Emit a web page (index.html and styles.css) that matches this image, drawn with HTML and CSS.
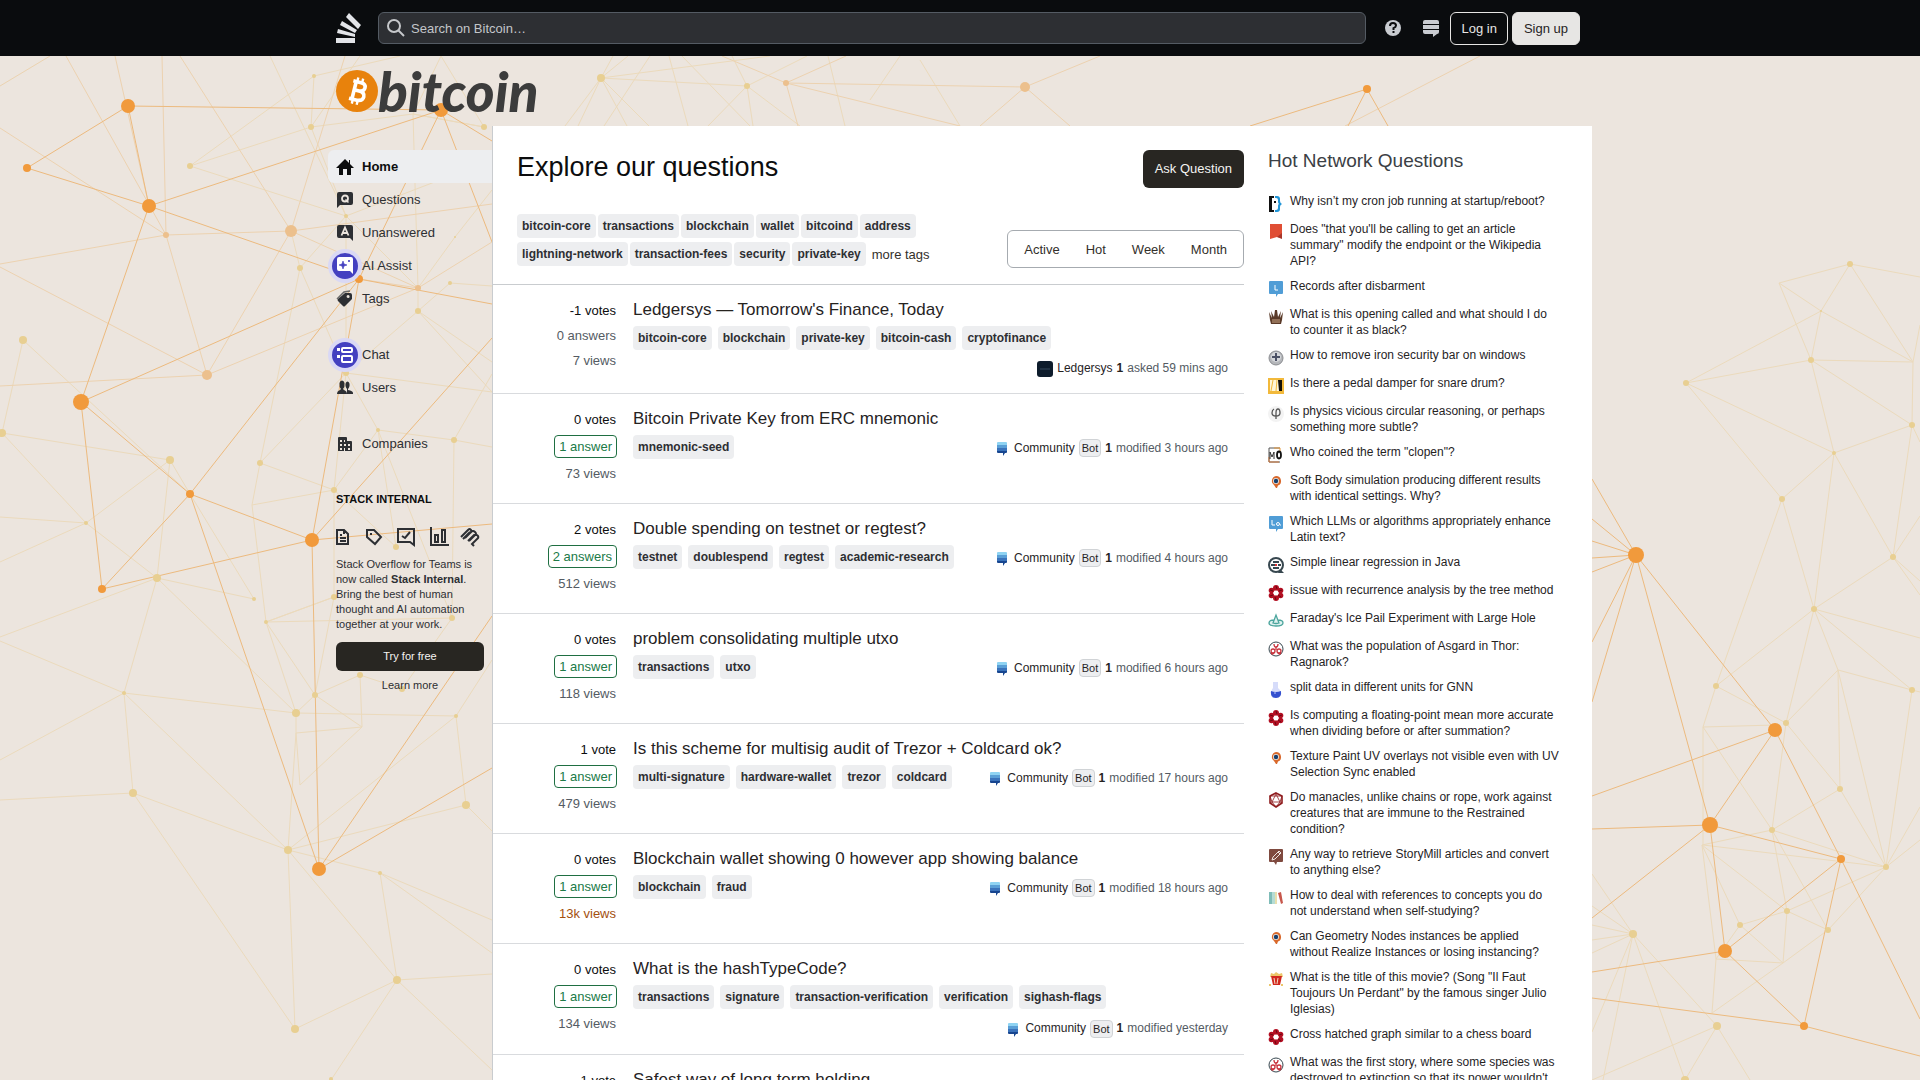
FILE: index.html
```html
<!DOCTYPE html>
<html lang="en">
<head>
    <meta charset="UTF-8">
    <meta name="viewport" content="width=device-width, initial-scale=1.0">
    <title>Bitcoin Stack Exchange</title>
    <link rel="stylesheet" href="styles.css">
</head>
<body>

<!-- icon sprite -->
<svg class="sprite" aria-hidden="true">
    <symbol id="i-unix" viewBox="0 0 16 16"><path d="M1 0h5v2H4v12h2v2H1z" fill="#111"/><path d="M7 0h2q3 0 3 3v2q0 2 2 3q-2 1-2 3v2q0 3-3 3H7v-2h1q2 0 2-2v-2q0-2 1-2q-1-1-1-2V4q0-2-2-2H7z" fill="#2196d8"/><path d="M6 5h2v2H6z" fill="#111"/></symbol>
    <symbol id="i-flag" viewBox="0 0 16 16"><path d="M2 0h12v14l-5-1-7 2z" fill="#e04e34"/><path d="M14 9v6l-5-2z" fill="#a8362a"/></symbol>
    <symbol id="i-law" viewBox="0 0 16 16"><path d="M2 0h12q1 0 1 1v11q0 1-1 1h-4l-2 3v-3H2q-1 0-1-1V1q0-1 1-1z" fill="#509dd6"/><path d="M7 4v5h3" fill="none" stroke="#fff"/></symbol>
    <symbol id="i-latin" viewBox="0 0 16 16"><path d="M2 0h12q1 0 1 1v11q0 1-1 1h-4l-2 3v-3H2q-1 0-1-1V1q0-1 1-1z" fill="#509dd6"/><path d="M4 4v5h3M12 9h1" fill="none" stroke="#fff"/><circle cx="10" cy="8" r="1.5" fill="none" stroke="#fff"/></symbol>
    <symbol id="i-chess" viewBox="0 0 16 16"><path d="M3 15l-1-4-1-8 3 6-1-7 3 6 1-7h2l1 7 3-6-1 7 3-6-1 8-1 4z" fill="#5a3a28"/><path d="M4 11h8M4 13h8" stroke="#c9a585"/></symbol>
    <symbol id="i-diy" viewBox="0 0 16 16"><circle cx="8" cy="8" r="7" fill="#b4b6ba" stroke="#8b8d91"/><circle cx="8" cy="7" r="5" fill="#d5d7da"/><path d="M7 3h2v3h3v2H9v3H7V8H4V6h3z" fill="#4c5266"/></symbol>
    <symbol id="i-music" viewBox="0 0 16 16"><path d="M0 0h16v16H0z" fill="#f2b93b"/><path d="M2 2h12v11H2z" fill="#fff6d8"/><path d="M5 2L3 13M9 2L8 13" stroke="#f2b93b"/><path d="M10 2h4v11h-3z" fill="#15110a"/></symbol>
    <symbol id="i-phi" viewBox="0 0 16 16"><circle cx="8" cy="8" r="8" fill="#f3f3f3"/><path d="M6 3Q4 4 4 7q0 3 4 3t4-3q0-4-2-4T8 7v6" fill="none" stroke="#555" stroke-width="1.3"/></symbol>
    <symbol id="i-mo" viewBox="0 0 16 16"><path d="M12 1H1v14h11" fill="none" stroke="#555"/><path d="M1 10v5h10" fill="none" stroke="#d17a3e"/><path d="M6 1h6v3" fill="none" stroke="#e89a3c"/><path d="M2 12V5l2 5 2-5v7" fill="none" stroke="#333"/><ellipse cx="11" cy="8" rx="2" ry="3.5" fill="none" stroke="#111" stroke-width="1.8"/></symbol>
    <symbol id="i-blender" viewBox="0 0 16 16"><path d="M8 1a5 5 0 0 1 2 9.600L9 13H8l-2-3A5 5 0 0 1 8 1z" fill="#d9692c"/><circle cx="8" cy="6" r="3" fill="#e8e4e0"/><circle cx="8" cy="6" r="2.200" fill="#17406d"/></symbol>
    <symbol id="i-so-code" viewBox="0 0 16 16"><circle cx="8" cy="8" r="7" fill="none" stroke="#37474f" stroke-width="2"/><path d="M12 12l4 4h-6z" fill="#37474f"/><path d="M5 5h6M3 8h4M10 8h3M5 11h6" stroke="#37474f" stroke-width="2"/><path d="M7 8h2" stroke="#d33" stroke-width="2"/></symbol>
    <symbol id="i-mathematica" viewBox="0 0 16 16"><g fill="#b30f22"><circle cx="8" cy="3" r="3"/><circle cx="12.500" cy="5.500" r="2.800"/><circle cx="12.500" cy="10.500" r="2.800"/><circle cx="8" cy="13" r="3"/><circle cx="3.500" cy="10.500" r="2.800"/><circle cx="3.500" cy="5.500" r="2.800"/></g><path d="M8 1l1 3M14 5l-3 1M13 12l-3-2M8 15l-1-3M2 11l3-1M2 5l3 1" stroke="#6b0713"/><circle cx="8" cy="8" r="2.500" fill="#fff"/></symbol>
    <symbol id="i-physics" viewBox="0 0 16 16"><path d="M1 10q0-3 5-3l2-5 2 5q5 0 5 3t-7 3-7-3z" fill="#dff1ef"/><path d="M6 7Q1 7 1 10t7 3 7-3q0-3-5-3M5 10l3-8 3 8q-3 1-6 0z" fill="none" stroke="#4ba59d" stroke-width="1.300"/></symbol>
    <symbol id="i-scifi" viewBox="0 0 16 16"><circle cx="8" cy="8" r="7" fill="#fff" stroke="#37474f"/><g fill="none" stroke="#c8323c" stroke-width="1.300"><path d="M6 3q0 3 2 3t2-3"/><circle cx="5" cy="10" r="2"/><circle cx="11" cy="10" r="2"/><path d="M8 6v3M3 12q2 2 3 0M13 12q-2 2-3 0"/></g></symbol>
    <symbol id="i-flask" viewBox="0 0 16 16"><path d="M5 0h5v6q3 2 3 5t-5 5-5-5q0-3 2-5z" fill="#d6dcfa"/><path d="M3 9q5 2 10 0 1 7-5 7T3 9z" fill="#3450cf"/><circle cx="7" cy="11" r="1" fill="#8fa1ee"/></symbol>
    <symbol id="i-rpg" viewBox="0 0 16 16"><path d="M8 1l6 3v7l-6 4-6-4V4z" fill="#fff" stroke="#8f1d1f" stroke-width="1.600"/><path d="M8 2L4 10h8zM2 4l2 6 4 5 4-5 2-6M2 4h12M4 10l-2 1M12 10l2 1" fill="none" stroke="#8f1d1f" stroke-width=".8"/></symbol>
    <symbol id="i-writing" viewBox="0 0 16 16"><path d="M2 0h12q1 0 1 1v11q0 1-1 1H9l-1 3-2-3H2q-1 0-1-1V1q0-1 1-1z" fill="#7f4a3f"/><path d="M4 11l1-3 6-6 2 2-6 6zM10 3l2 2" fill="none" stroke="#f0e4e0"/></symbol>
    <symbol id="i-books" viewBox="0 0 16 16"><path d="M1 2h3v12H1z" fill="#7fbcb8"/><path d="M4 2h3v12H4z" fill="#b5dcd4"/><path d="M7 2h2v12H7z" fill="#e8dfae"/><path d="M10 3l3-1 2 11-2 1z" fill="#c7574c"/></symbol>
    <symbol id="i-movies" viewBox="0 0 16 16"><path d="M2 5l1-4 3 1 2-2 3 2 3-1 1 4z" fill="#ecc76b"/><path d="M3 4h11l-2 9H5z" fill="#d1281e"/><path d="M6 6l1 6M10 6l-1 6" stroke="#f6dcc5"/><path d="M1 13h2M13 13h2" stroke="#ecc76b" stroke-width="2"/></symbol>
    <symbol id="i-community" viewBox="0 0 16 16"><path d="M3 3q0-1 1-1h8q1 0 1 1v2H3z" fill="#8fd3f2"/><path d="M3 5h10v3H3z" fill="#5a9fd6"/><path d="M3 8h10v3H3z" fill="#3a72ba"/><path d="M3 11h10v1q0 1-1 1h-1l-2 3v-3H4q-1 0-1-1z" fill="#17458f"/></symbol>
</svg>

<!-- node graph behind the page -->
<svg class="backdrop" viewBox="0 0 1920 1080" preserveAspectRatio="xMidYMin slice" aria-hidden="true">
    <g class="lines-pale">
        <path d="M2 433L23 340L190 494L170 460L86 523L2 433L170 460L157 578L124 693L133 793L288 850L295 1029L133 793L0 800M0 517L86 523L0 562M86 523L157 578L254 599L190 494M0 637L157 578L296 713L124 693L288 850M0 641L124 693L0 760"/>
        <path d="M288 850L466 805L456 716L288 850L397 980L295 1029M288 850L380 873L397 980L492 974M397 980L492 1070M397 980L331 1080M492 920L380 873L492 953M466 805L492 831M456 716L492 660M456 716L296 713L315 695L362 727L296 733L288 850M296 713V733L300 785L362 727L360 675L315 695M360 675L402 689L452 618L266 622L296 713"/>
        <path d="M266 622L252 505L260 463L300 268L291 231M260 463L346 373M260 463L334 490L252 505M266 622L334 597L315 695L266 622L334 597V490L396 547M334 490L346 373L378 430L454 440L452 618M334 490L378 430L396 547M378 430L452 618M346 373L300 268M346 373L418 311L450 283L492 286M418 311V288L413 114L441 56M492 374L454 440L492 447M418 311L492 362M418 311L492 392L346 373"/>
        <path d="M300 268L346 216L311 127L314 76L190 166L346 216L418 288M311 127L190 166M311 127L413 114L484 127L441 56M346 216L270 56M311 127L360 56M413 114L484 127M455 237L492 190M455 237L418 288M346 373V216L492 160M314 76L400 56"/>
        <path d="M565 126L601 78L578 126M627 126L601 78L649 126M613 56L601 78L628 56M601 78L770 56M601 78L747 86L708 126M747 86L753 126M747 86L807 56M747 86L732 56M650 56L604 126M669 56L688 126M682 56L750 126M828 56L845 126M747 86L800 126M870 100L900 56M920 60L960 126"/>
        <path d="M1686 383L1821 311L1779 283L1850 264L1821 311L1811 360L1779 283M1850 264L1913 362L1821 311M1850 264L1920 277M1686 383L1811 360L1913 362L1912 425L1811 360L1834 453L1686 383L1782 499L1834 453L1912 425L1893 557L1834 453L1814 609L1782 499L1716 686L1814 609L1893 557L1920 516M1913 362L1920 325M1912 425L1920 442M1893 557L1920 595M1893 557L1920 581"/>
        <path d="M1920 638L1814 609L1912 690L1920 692M1814 609L1786 723L1716 686L1703 727L1775 725M1703 727L1772 830L1786 723L1838 670L1814 609M1838 670L1912 690L1886 867L1838 670L1840 789L1772 830L1886 867L1840 789L1786 723M1703 727V845L1886 867L1920 807M1886 867L1920 840M1702 845L1772 830L1787 911L1886 867L1828 930L1772 830M1702 845L1787 911L1828 930L1783 963L1787 911L1740 925L1702 845L1716 959L1783 963L1740 925L1716 959L1712 1013L1783 963"/>
        <path d="M1592 874L1633 934L1592 906M1592 925L1633 934L1592 940M1592 953L1633 934L1592 1032M1633 934L1603 1080M1633 934L1717 1026L1592 1080M1633 934L1685 1080L1717 1026L1750 1080"/>
    </g>
    <g class="lines-mid">
        <path d="M0 264L166 235L291 231L207 375L166 235L0 128M0 267L207 375L0 386M162 56L166 235L66 56M180 56L291 231L345 56M115 56L149 206M291 231L418 288L207 375M291 231L492 204M0 86L50 56M359 279L418 288L492 242"/>
        <path d="M722 56L786 83L798 126M846 56L786 83L960 126M786 83L1025 87L1100 56M1025 87L1070 126M1025 87L980 126M1480 56L1345 126"/>
    </g>
    <g class="lines-strong">
        <path d="M27 168L128 106L149 206L27 168M128 106L441 110L149 206L359 279L81 402L149 206M81 402L190 494L102 589L81 402M102 589L312 540L190 494L359 279L312 540L319 869L190 494M441 110L359 279L492 304M441 110L492 242M441 110L492 141M492 338L312 540L492 524M492 616L319 869L492 768"/>
        <path d="M1250 126L1367 89L1348 126M1367 89L1388 126M1592 479L1636 555L1592 519M1592 541L1636 555L1592 558M1592 572L1636 555L1592 642M1592 702L1636 555L1775 730L1592 796M1636 555L1710 825L1775 730L1841 859L1710 825L1592 829M1592 918L1710 825L1725 951L1592 972M1725 951L1841 859L1804 1026L1725 951M1841 859L1920 1019M1592 998L1804 1026L1920 1056"/>
    </g>
    <g class="dots-pale">
        <circle cx="23" cy="340" r="4"/><circle cx="2" cy="433" r="4"/><circle cx="170" cy="460" r="4"/><circle cx="86" cy="523" r="2"/><circle cx="157" cy="578" r="4"/><circle cx="124" cy="693" r="2"/><circle cx="133" cy="793" r="4"/><circle cx="254" cy="599" r="2"/><circle cx="266" cy="622" r="2"/><circle cx="260" cy="463" r="3"/><circle cx="300" cy="268" r="3"/><circle cx="334" cy="490" r="3"/><circle cx="346" cy="373" r="3"/><circle cx="346" cy="216" r="2"/><circle cx="311" cy="127" r="3"/><circle cx="190" cy="166" r="3"/><circle cx="378" cy="430" r="2"/><circle cx="454" cy="440" r="3"/><circle cx="418" cy="311" r="3"/><circle cx="450" cy="283" r="2"/><circle cx="396" cy="547" r="3"/><circle cx="334" cy="597" r="3"/><circle cx="452" cy="618" r="3"/><circle cx="315" cy="695" r="3"/><circle cx="296" cy="713" r="4"/><circle cx="360" cy="675" r="3"/><circle cx="402" cy="689" r="3"/><circle cx="456" cy="716" r="2"/><circle cx="466" cy="805" r="4"/><circle cx="288" cy="850" r="4"/><circle cx="380" cy="873" r="2"/><circle cx="397" cy="980" r="4"/><circle cx="295" cy="1029" r="4"/><circle cx="331" cy="1079" r="2"/><circle cx="484" cy="127" r="3"/><circle cx="314" cy="76" r="2"/><circle cx="455" cy="237" r="1"/>
        <circle cx="601" cy="78" r="4"/><circle cx="747" cy="86" r="3"/>
        <circle cx="1850" cy="264" r="3"/><circle cx="1821" cy="311" r="1"/><circle cx="1811" cy="360" r="3"/><circle cx="1686" cy="383" r="3"/><circle cx="1912" cy="425" r="3"/><circle cx="1834" cy="453" r="2"/><circle cx="1782" cy="499" r="3"/><circle cx="1893" cy="557" r="3"/><circle cx="1814" cy="609" r="3"/><circle cx="1716" cy="686" r="3"/><circle cx="1786" cy="723" r="3"/><circle cx="1912" cy="690" r="3"/><circle cx="1840" cy="789" r="3"/><circle cx="1772" cy="830" r="3"/><circle cx="1886" cy="867" r="3"/><circle cx="1787" cy="911" r="3"/><circle cx="1740" cy="925" r="3"/><circle cx="1828" cy="930" r="3"/><circle cx="1633" cy="934" r="4"/><circle cx="1717" cy="1026" r="4"/><circle cx="1685" cy="1080" r="4"/>
    </g>
    <g class="dots-mid">
        <circle cx="291" cy="231" r="6"/><circle cx="166" cy="235" r="3"/><circle cx="207" cy="375" r="5"/><circle cx="418" cy="288" r="3"/><circle cx="786" cy="83" r="3"/><circle cx="1025" cy="87" r="5"/>
    </g>
    <g class="dots-strong">
        <circle cx="128" cy="106" r="7"/><circle cx="27" cy="168" r="4"/><circle cx="149" cy="206" r="7"/><circle cx="441" cy="110" r="7"/><circle cx="359" cy="279" r="4"/><circle cx="81" cy="402" r="8"/><circle cx="190" cy="494" r="4"/><circle cx="102" cy="589" r="4"/><circle cx="312" cy="540" r="7"/><circle cx="319" cy="869" r="7"/>
        <circle cx="1367" cy="89" r="4"/><circle cx="1636" cy="555" r="8"/><circle cx="1775" cy="730" r="7"/><circle cx="1710" cy="825" r="8"/><circle cx="1725" cy="951" r="7"/><circle cx="1841" cy="859" r="4"/><circle cx="1804" cy="1026" r="4"/>
    </g>
</svg>

<header class="topbar">
    <div class="topbar-inner">
        <a href="#" class="se-logo" aria-label="Stack Exchange">
            <svg width="26" height="32" viewBox="0 0 26 32"><path d="M0 26h19v5H0zM2 17l17 5v3L1 21zM6 9l15 9-2 3L4 13zM13 1l12 12-3 4L10 5z" fill="#e2e4e8"/></svg>
        </a>
        <form class="search">
            <svg width="18" height="18" viewBox="0 0 18 18"><circle cx="7" cy="7" r="6" fill="none" stroke="#c6c8cb" stroke-width="2"/><path d="M11 11l6 6" stroke="#c6c8cb" stroke-width="2"/></svg>
            <input type="text" placeholder="Search on Bitcoin…" aria-label="Search">
        </form>
        <nav class="topbar-nav">
            <a href="#" class="topbar-icon" aria-label="Help">
                <svg width="18" height="18" viewBox="0 0 18 18"><circle cx="9" cy="9" r="8" fill="#c9ccd1"/><path d="M6 7q0-3 3-3t3 2.500Q12 8 9.500 9.200V11" fill="none" stroke="#0b0c0e" stroke-width="2"/><path d="M8.500 12h2v2h-2z" fill="#0b0c0e"/></svg>
            </a>
            <a href="#" class="topbar-icon" aria-label="Site switcher">
                <svg width="18" height="18" viewBox="0 0 18 18"><path d="M3 1h12q2 0 2 2v2H1V3q0-2 2-2zM1 6h16v4H1zM1 11h16v2q0 2-2 2l-4 3v-3H3q-2 0-2-2z" fill="#c9ccd1"/></svg>
            </a>
            <a href="#" class="btn-login">Log in</a>
            <a href="#" class="btn-signup">Sign up</a>
        </nav>
    </div>
</header>

<div class="container">
    <div class="site-header">
        <a href="#" aria-label="Bitcoin">
            <svg class="site-logo" width="204" height="46" viewBox="0 0 204 46">
                <circle cx="21" cy="22" r="21" fill="#e8820c"/>
                <g transform="rotate(14 21 22)" fill="none" stroke="#fff">
                    <path d="M15 13h8q5 0 5 4t-5 4.500q6 0 6 4.500t-6 5h-8M18 13v18M18 21.500h6" stroke-width="3.600"/>
                    <path d="M19 8.500v5M24 8.500v5M19 30v5.500M24 30v5.500" stroke-width="2.400"/>
                </g>
                <text x="42" y="43" class="logo-text">bitcoin</text>
            </svg>
        </a>
    </div>

    <div class="columns">
        <aside class="left-nav">
            <nav>
                <ul class="nav-group">
                    <li><a href="#" class="nav-item active">
                        <svg width="18" height="18" viewBox="0 0 18 18"><path d="M9 1L0 10h3v7h4v-6h4v6h4v-7h3l-4-4V2h-1v3z" fill="#0c0d0e"/></svg>Home</a></li>
                    <li><a href="#" class="nav-item">
                        <svg width="18" height="18" viewBox="0 0 18 18"><path d="M3 1h12q2 0 2 2v9q0 2-2 2H4l-3 3V3q0-2 2-2z" fill="#2d2f33"/><circle cx="9" cy="7.500" r="3" fill="none" stroke="#ece5de" stroke-width="1.800"/><path d="M9.500 8.500l3 3" stroke="#ece5de" stroke-width="1.500"/></svg>Questions</a></li>
                    <li><a href="#" class="nav-item">
                        <svg width="18" height="18" viewBox="0 0 18 18"><path d="M3 1h12q2 0 2 2v14l-3-3H3q-2 0-2-2V3q0-2 2-2z" fill="#2d2f33"/><path d="M5.500 11.500L9 3.500l3.500 8M7 9h4" fill="none" stroke="#ece5de" stroke-width="1.800"/></svg>Unanswered</a></li>
                    <li><a href="#" class="nav-item">
                        <span class="spot"><svg width="18" height="18" viewBox="0 0 18 18"><path d="M3 0h12q2 0 2 2v15l-3-3H3q-2 0-2-2V2q0-2 2-2z" fill="#fff"/><path d="M7 4l1 3 3 1-3 1-1 3-1-3-3-1 3-1zM13 3l1 1-1 1-1-1z" fill="#4340c0" stroke="#4340c0" stroke-width=".6"/></svg></span>AI Assist</a></li>
                    <li><a href="#" class="nav-item">
                        <svg width="18" height="18" viewBox="0 0 18 18"><path d="M1 9l7-7 6-1" fill="none" stroke="#6b6b6b" stroke-width="1.500"/><path d="M9 3h5q2 0 2 2v4l-7 7q-1 1-2 0l-5-5q-1-1 0-2zM12 5a1.500 1.500 0 1 0 .1 3 1.500 1.500 0 0 0 0-3z" fill="#2d2f33" fill-rule="evenodd"/></svg>Tags</a></li>
                </ul>
                <ul class="nav-group">
                    <li><a href="#" class="nav-item">
                        <span class="spot"><svg width="18" height="18" viewBox="0 0 18 18"><path d="M1 2h3v3H1zM1 9h3v3H1z" fill="#fff"/><rect x="6" y="2" width="10" height="4" rx="1" fill="none" stroke="#fff" stroke-width="2"/><rect x="6" y="10" width="10" height="6" rx="1" fill="none" stroke="#fff" stroke-width="2"/></svg></span>Chat</a></li>
                    <li><a href="#" class="nav-item">
                        <svg width="18" height="18" viewBox="0 0 18 18"><path d="M17 14q0-2-5-3v-1q1-1 1.500-3Q14 3 11.500 2.500 9 3 9.500 7q.5 2 1.500 3v5h6z" fill="#2d2f33"/><path d="M1 15q0-3 3-4l1-1Q3 8 3.500 4 4 1.500 6 1.500T8.500 4Q9 8 7 10l1 1q3 1 3 4z" fill="#2d2f33"/></svg>Users</a></li>
                </ul>
                <ul class="nav-group">
                    <li><a href="#" class="nav-item">
                        <svg width="18" height="18" viewBox="0 0 18 18"><path d="M2 3q0-1 1-1h7q1 0 1 1v3h4q1 0 1 1v9H2zM4 5v2h2V5zM8 5v2h1V5zM4 9v2h2V9zM8 9v2h2V9zM12 9v2h2V9zM4 13v2h2v-2zM8 13v3h1v-3zM12 13v2h2v-2z" fill="#2d2f33" fill-rule="evenodd"/></svg>Companies</a></li>
                </ul>
            </nav>
            <div class="internal">
                <h2>Stack Internal</h2>
                <div class="internal-icons">
                    <svg width="15" height="18" viewBox="0 0 15 18"><path d="M1 2h7l4 4v10H1zM8 2v4M4 7h2M4 10h6M4 13h6" /></svg>
                    <svg width="18" height="18" viewBox="0 0 18 18"><path d="M2 2h7l7 7-6 7-8-7zM5 6h2"/></svg>
                    <svg width="19" height="18" viewBox="0 0 19 18"><path d="M1 1h16v16l-4-3H1zM5 8l3 2 5-6"/></svg>
                    <svg width="19" height="20" viewBox="0 0 19 20"><path d="M1 0v18h18M5 8h3v7H5zM12 3h3v12h-3z"/></svg>
                    <svg width="19" height="20" viewBox="3 0 19 20"><path d="M1 10l7-7q2-2 3 0t-1 3l-5 5M5 11l6-6q2-2 4 0t0 3l-6 6M8 14l6-6q3-1 4 1t-1 3l-5 5 2 2M3 12l7-7"/></svg>
                </div>
                <p>Stack Overflow for Teams is now called <strong>Stack Internal</strong>. Bring the best of human thought and AI automation together at your work.</p>
                <a href="#" class="btn-dark btn-try">Try for free</a>
                <a href="#" class="learn-more">Learn more</a>
            </div>
        </aside>

        <div class="content">
            <main class="mainbar">
                <div class="page-head">
                    <h1>Explore our questions</h1>
                    <a href="#" class="btn-dark btn-ask">Ask Question</a>
                </div>
                <div class="filter-row">
                    <div class="top-tags">
                        <a href="#" class="tag">bitcoin-core</a>
                        <a href="#" class="tag">transactions</a>
                        <a href="#" class="tag">blockchain</a>
                        <a href="#" class="tag">wallet</a>
                        <a href="#" class="tag">bitcoind</a>
                        <a href="#" class="tag">address</a>
                        <a href="#" class="tag">lightning-network</a>
                        <a href="#" class="tag">transaction-fees</a>
                        <a href="#" class="tag">security</a>
                        <a href="#" class="tag">private-key</a>
                        <a href="#" class="more-tags">more tags</a>
                    </div>
                    <div class="filters">
                        <a href="#">Active</a>
                        <a href="#">Hot</a>
                        <a href="#">Week</a>
                        <a href="#">Month</a>
                    </div>
                </div>

                <div class="question">
                    <div class="stats">
                        <span class="stat votes">-1 votes</span>
                        <span class="stat">0 answers</span>
                        <span class="stat">7 views</span>
                    </div>
                    <div class="summary">
                        <h3><a href="#">Ledgersys — Tomorrow's Finance, Today</a></h3>
                        <div class="meta">
                            <div class="tags"><a href="#" class="tag">bitcoin-core</a><a href="#" class="tag">blockchain</a><a href="#" class="tag">private-key</a><a href="#" class="tag">bitcoin-cash</a><a href="#" class="tag">cryptofinance</a></div>
                            <div class="user-card">
                                <svg width="16" height="16" viewBox="0 0 16 16"><rect width="16" height="16" rx="3" fill="#0e1c2c"/><path d="M3 8h10" stroke="#34485c"/></svg>
                                <a href="#">Ledgersys</a><b>1</b><time>asked 59 mins ago</time>
                            </div>
                        </div>
                    </div>
                </div>

                <div class="question">
                    <div class="stats">
                        <span class="stat votes">0 votes</span>
                        <span class="stat answered">1 answer</span>
                        <span class="stat">73 views</span>
                    </div>
                    <div class="summary">
                        <h3><a href="#">Bitcoin Private Key from ERC mnemonic</a></h3>
                        <div class="meta">
                            <div class="tags"><a href="#" class="tag">mnemonic-seed</a></div>
                            <div class="user-card with-bot">
                                <svg width="16" height="16"><use href="#i-community"/></svg>
                                <a href="#">Community</a><span class="bot">Bot</span><b>1</b><time>modified 3 hours ago</time>
                            </div>
                        </div>
                    </div>
                </div>

                <div class="question">
                    <div class="stats">
                        <span class="stat votes">2 votes</span>
                        <span class="stat answered">2 answers</span>
                        <span class="stat">512 views</span>
                    </div>
                    <div class="summary">
                        <h3><a href="#">Double spending on testnet or regtest?</a></h3>
                        <div class="meta">
                            <div class="tags"><a href="#" class="tag">testnet</a><a href="#" class="tag">doublespend</a><a href="#" class="tag">regtest</a><a href="#" class="tag">academic-research</a></div>
                            <div class="user-card with-bot">
                                <svg width="16" height="16"><use href="#i-community"/></svg>
                                <a href="#">Community</a><span class="bot">Bot</span><b>1</b><time>modified 4 hours ago</time>
                            </div>
                        </div>
                    </div>
                </div>

                <div class="question">
                    <div class="stats">
                        <span class="stat votes">0 votes</span>
                        <span class="stat answered">1 answer</span>
                        <span class="stat">118 views</span>
                    </div>
                    <div class="summary">
                        <h3><a href="#">problem consolidating multiple utxo</a></h3>
                        <div class="meta">
                            <div class="tags"><a href="#" class="tag">transactions</a><a href="#" class="tag">utxo</a></div>
                            <div class="user-card with-bot">
                                <svg width="16" height="16"><use href="#i-community"/></svg>
                                <a href="#">Community</a><span class="bot">Bot</span><b>1</b><time>modified 6 hours ago</time>
                            </div>
                        </div>
                    </div>
                </div>

                <div class="question">
                    <div class="stats">
                        <span class="stat votes">1 vote</span>
                        <span class="stat answered">1 answer</span>
                        <span class="stat">479 views</span>
                    </div>
                    <div class="summary">
                        <h3><a href="#">Is this scheme for multisig audit of Trezor + Coldcard ok?</a></h3>
                        <div class="meta">
                            <div class="tags"><a href="#" class="tag">multi-signature</a><a href="#" class="tag">hardware-wallet</a><a href="#" class="tag">trezor</a><a href="#" class="tag">coldcard</a></div>
                            <div class="user-card with-bot">
                                <svg width="16" height="16"><use href="#i-community"/></svg>
                                <a href="#">Community</a><span class="bot">Bot</span><b>1</b><time>modified 17 hours ago</time>
                            </div>
                        </div>
                    </div>
                </div>

                <div class="question">
                    <div class="stats">
                        <span class="stat votes">0 votes</span>
                        <span class="stat answered">1 answer</span>
                        <span class="stat warm">13k views</span>
                    </div>
                    <div class="summary">
                        <h3><a href="#">Blockchain wallet showing 0 however app showing balance</a></h3>
                        <div class="meta">
                            <div class="tags"><a href="#" class="tag">blockchain</a><a href="#" class="tag">fraud</a></div>
                            <div class="user-card with-bot">
                                <svg width="16" height="16"><use href="#i-community"/></svg>
                                <a href="#">Community</a><span class="bot">Bot</span><b>1</b><time>modified 18 hours ago</time>
                            </div>
                        </div>
                    </div>
                </div>

                <div class="question">
                    <div class="stats">
                        <span class="stat votes">0 votes</span>
                        <span class="stat answered">1 answer</span>
                        <span class="stat">134 views</span>
                    </div>
                    <div class="summary">
                        <h3><a href="#">What is the hashTypeCode?</a></h3>
                        <div class="meta">
                            <div class="tags"><a href="#" class="tag">transactions</a><a href="#" class="tag">signature</a><a href="#" class="tag">transaction-verification</a><a href="#" class="tag">verification</a><a href="#" class="tag">sighash-flags</a></div>
                            <div class="user-card with-bot">
                                <svg width="16" height="16"><use href="#i-community"/></svg>
                                <a href="#">Community</a><span class="bot">Bot</span><b>1</b><time>modified yesterday</time>
                            </div>
                        </div>
                    </div>
                </div>

                <div class="question">
                    <div class="stats">
                        <span class="stat votes">1 vote</span>
                    </div>
                    <div class="summary">
                        <h3><a href="#">Safest way of long term holding</a></h3>
                    </div>
                </div>
            </main>

            <aside class="hot">
                <h4>Hot Network Questions</h4>
                <ul>
                    <li><svg width="16" height="16"><use href="#i-unix"/></svg><a href="#">Why isn’t my cron job running at startup/reboot?</a></li>
                    <li><svg width="16" height="16"><use href="#i-flag"/></svg><a href="#">Does "that you'll be calling to get an article summary" modify the endpoint or the Wikipedia API?</a></li>
                    <li><svg width="16" height="16"><use href="#i-law"/></svg><a href="#">Records after disbarment</a></li>
                    <li><svg width="16" height="16"><use href="#i-chess"/></svg><a href="#">What is this opening called and what should I do to counter it as black?</a></li>
                    <li><svg width="16" height="16"><use href="#i-diy"/></svg><a href="#">How to remove iron security bar on windows</a></li>
                    <li><svg width="16" height="16"><use href="#i-music"/></svg><a href="#">Is there a pedal damper for snare drum?</a></li>
                    <li><svg width="16" height="16"><use href="#i-phi"/></svg><a href="#">Is physics vicious circular reasoning, or perhaps something more subtle?</a></li>
                    <li><svg width="16" height="16"><use href="#i-mo"/></svg><a href="#">Who coined the term "clopen"?</a></li>
                    <li><svg width="16" height="16"><use href="#i-blender"/></svg><a href="#">Soft Body simulation producing different results with identical settings. Why?</a></li>
                    <li><svg width="16" height="16"><use href="#i-latin"/></svg><a href="#">Which LLMs or algorithms appropriately enhance Latin text?</a></li>
                    <li><svg width="16" height="16"><use href="#i-so-code"/></svg><a href="#">Simple linear regression in Java</a></li>
                    <li><svg width="16" height="16"><use href="#i-mathematica"/></svg><a href="#">issue with recurrence analysis by the tree method</a></li>
                    <li><svg width="16" height="16"><use href="#i-physics"/></svg><a href="#">Faraday's Ice Pail Experiment with Large Hole</a></li>
                    <li><svg width="16" height="16"><use href="#i-scifi"/></svg><a href="#">What was the population of Asgard in Thor: Ragnarok?</a></li>
                    <li><svg width="16" height="16"><use href="#i-flask"/></svg><a href="#">split data in different units for GNN</a></li>
                    <li><svg width="16" height="16"><use href="#i-mathematica"/></svg><a href="#">Is computing a floating-point mean more accurate when dividing before or after summation?</a></li>
                    <li><svg width="16" height="16"><use href="#i-blender"/></svg><a href="#">Texture Paint UV overlays not visible even with UV Selection Sync enabled</a></li>
                    <li><svg width="16" height="16"><use href="#i-rpg"/></svg><a href="#">Do manacles, unlike chains or rope, work against creatures that are immune to the Restrained condition?</a></li>
                    <li><svg width="16" height="16"><use href="#i-writing"/></svg><a href="#">Any way to retrieve StoryMill articles and convert to anything else?</a></li>
                    <li><svg width="16" height="16"><use href="#i-books"/></svg><a href="#">How to deal with references to concepts you do not understand when self-studying?</a></li>
                    <li><svg width="16" height="16"><use href="#i-blender"/></svg><a href="#">Can Geometry Nodes instances be applied without Realize Instances or losing instancing?</a></li>
                    <li><svg width="16" height="16"><use href="#i-movies"/></svg><a href="#">What is the title of this movie? (Song "Il Faut Toujours Un Perdant" by the famous singer Julio Iglesias)</a></li>
                    <li><svg width="16" height="16"><use href="#i-mathematica"/></svg><a href="#">Cross hatched graph similar to a chess board</a></li>
                    <li><svg width="16" height="16"><use href="#i-scifi"/></svg><a href="#">What was the first story, where some species was destroyed to extinction so that its power wouldn't</a></li>
                </ul>
            </aside>
        </div>
    </div>
</div>

</body>
</html>
```
FILE: styles.css
```css
* {
    box-sizing: border-box;
}

body {
    margin: 0;
    height: 100vh;
    overflow: hidden;
    position: relative;
    background-color: #ece5de;
    font-family: "Liberation Sans", Arial, sans-serif;
    font-size: 13px;
    line-height: 17px;
    color: #0c0d0e;
}

a {
    color: inherit;
    text-decoration: none;
}

ul {
    list-style: none;
    margin: 0;
    padding: 0;
}

h1, h2, h3, h4, p {
    margin: 0;
    font-weight: normal;
}

svg {
    flex-shrink: 0;
}

.sprite {
    position: absolute;
    width: 0;
    height: 0;
}

/* background graph */
.backdrop {
    position: absolute;
    top: 0;
    left: 0;
    width: 100%;
    height: 100%;
    z-index: -1;
}

.backdrop path {
    fill: none;
}

.lines-pale { stroke: #ebdabc; }
.lines-mid { stroke: #ecd2b0; }
.lines-strong { stroke: #ecba7e; }
.dots-pale { fill: #e8cf92; }
.dots-mid { fill: #ecc08d; }
.dots-strong { fill: #f19a3c; }

/* top bar */
.topbar {
    background-color: #0a0c0e;
}

.topbar-inner {
    max-width: 1264px;
    height: 56px;
    margin: 0 auto;
    padding: 0 12px 0 8px;
    display: flex;
    align-items: center;
}

.se-logo {
    width: 42px;
}

.se-logo svg {
    display: block;
}

.search {
    flex: 1;
    height: 32px;
    display: flex;
    align-items: center;
    gap: 6px;
    padding: 0 8px;
    margin-right: 8px;
    background-color: #2d2f33;
    border: 1px solid #545b63;
    border-radius: 6px;
}

.search input {
    flex: 1;
    padding: 0;
    border: none;
    outline: none;
    background: none;
    color: #fff;
    font: inherit;
}

.search input::placeholder {
    color: #c3c6ca;
    opacity: 1;
}

.topbar-nav {
    display: flex;
    align-items: center;
}

.topbar-icon {
    display: flex;
    padding: 10px;
}

.btn-login,
.btn-signup {
    height: 33px;
    padding: 7px 10px;
    border: 1px solid #e7e6e4;
    border-radius: 6px;
    color: #e7e6e4;
}

.btn-signup {
    margin-left: 4px;
    padding: 7px 11px;
    background-color: #e7e6e4;
    color: #26231f;
}

/* layout */
.container {
    max-width: 1264px;
    margin: 0 auto;
}

.site-header {
    height: 70px;
    padding: 13px 8px 0;
}

.site-logo {
    display: block;
    overflow: visible;
}

.logo-text {
    font-family: Lato, sans-serif;
    font-size: 55px;
    font-weight: 900;
    font-style: italic;
    fill: #3c3c3c;
}

.columns {
    display: flex;
}

.left-nav {
    width: 164px;
    flex-shrink: 0;
    padding-top: 24px;
}

.nav-group {
    margin-bottom: 23px;
}

.nav-item {
    height: 33px;
    padding: 0 8px;
    display: flex;
    align-items: center;
    gap: 8px;
    color: #2d2f33;
}

.nav-item.active {
    background-color: #edeef0;
    border-radius: 6px 0 0 6px;
    font-weight: bold;
    color: #0c0d0e;
}

/* the ring sits outside the 18px icon box */
.spot {
    width: 18px;
    height: 18px;
    border-radius: 50%;
    background-color: #4340c0;
    box-shadow: 0 0 0 4px #4340c0, 0 0 0 8px #d9d8f5;
    display: flex;
}

.internal {
    padding: 9px 8px 0;
    font-size: 11px;
    line-height: 15px;
    color: #2d2f33;
}

.internal h2 {
    font-size: 11px;
    font-weight: bold;
    text-transform: uppercase;
    color: #0c0d0e;
}

.internal-icons {
    display: flex;
    align-items: center;
    gap: 14px;
    margin: 20px 0 10px;
    fill: none;
    stroke: #2d2f33;
    stroke-width: 2;
}

.internal-icons svg {
    overflow: visible;
}

.btn-dark {
    background-color: #282622;
    color: #f5f4f2;
    border-radius: 6px;
    text-align: center;
}

.btn-try {
    display: block;
    margin-top: 10px;
    padding: 7px;
}

.learn-more {
    display: block;
    margin-top: 7px;
    text-align: center;
}

.content {
    flex: 1;
    min-width: 0;
    min-height: calc(100vh - 126px);
    display: flex;
    gap: 24px;
    padding: 24px 24px 24px 0;
    background-color: #fff;
    border-left: 1px solid #c9cccf;
}

.mainbar {
    flex: 1;
    min-width: 0;
}

.page-head {
    display: flex;
    justify-content: space-between;
    align-items: flex-start;
    padding-left: 24px;
}

.page-head h1 {
    font-size: 27px;
    line-height: 34px;
}

.btn-ask {
    padding: 10px 12px 11px;
}

.filter-row {
    display: flex;
    justify-content: space-between;
    align-items: flex-end;
    gap: 16px;
    padding: 24px 0 16px 24px;
    border-bottom: 1px solid #c9cccf;
}

.top-tags {
    display: flex;
    flex-wrap: wrap;
    align-items: center;
    column-gap: 2px;
}

.top-tags .tag {
    margin: 2px 0;
}

.tag {
    padding: 4px 5px 3px;
    border-radius: 4px;
    background-color: #edeef0;
    font-size: 12px;
    font-weight: bold;
    color: #2d2f33;
}

.more-tags {
    margin-left: 4px;
    color: #33302b;
}

.filters {
    display: flex;
    padding: 3px;
    border: 1px solid #a6abb0;
    border-radius: 6px;
    color: #33302b;
}

.filters a {
    padding: 7px 13px 6px;
}

/* question list */
.question {
    display: flex;
    gap: 16px;
    padding: 14px 16px 16px;
    border-bottom: 1px solid #d9dbde;
}

.stats {
    width: 108px;
    flex-shrink: 0;
    display: flex;
    flex-direction: column;
    align-items: flex-end;
    gap: 6px;
    padding: 2px 0 4px;
    color: #545b63;
}

.stat {
    border: 1px solid transparent;
}

.stat.votes {
    color: #0c0d0e;
}

.stat.answered {
    padding: 2px 4px;
    border-color: #1f6f42;
    border-radius: 4px;
    color: #207a48;
}

.stat.warm {
    color: #a3500f;
}

.summary {
    flex: 1;
    min-width: 0;
}

.summary h3 {
    font-size: 17px;
    line-height: 22px;
    margin-bottom: 5px;
    color: #26231f;
}

.meta {
    display: flex;
    flex-wrap: wrap;
    align-items: center;
    gap: 8px;
}

.tags {
    display: flex;
    gap: 6px;
}

.tags .tag {
    height: 24px;
}

.user-card {
    height: 19px;
    padding-top: 2px;
    margin-left: auto;
    display: flex;
    align-items: center;
    gap: 4px;
    font-size: 12px;
    color: #26231f;
}

.user-card.with-bot {
    height: 21px;
}

.user-card time {
    color: #545b63;
}

.bot {
    padding: 0 2px;
    border: 1px solid #d0d3d6;
    border-radius: 4px;
    background-color: #edeef0;
    font-size: 11px;
    line-height: 16px;
}

/* hot network questions */
.hot {
    width: 300px;
    flex-shrink: 0;
    padding-right: 8px;
}

.hot h4 {
    font-size: 19px;
    line-height: 22px;
    margin-bottom: 21px;
    color: #3b4045;
}

.hot li {
    display: flex;
    gap: 6px;
    margin-bottom: 9px;
    font-size: 12px;
    line-height: 16px;
    color: #26231f;
}

.hot li svg {
    margin-top: 3px;
}
```
